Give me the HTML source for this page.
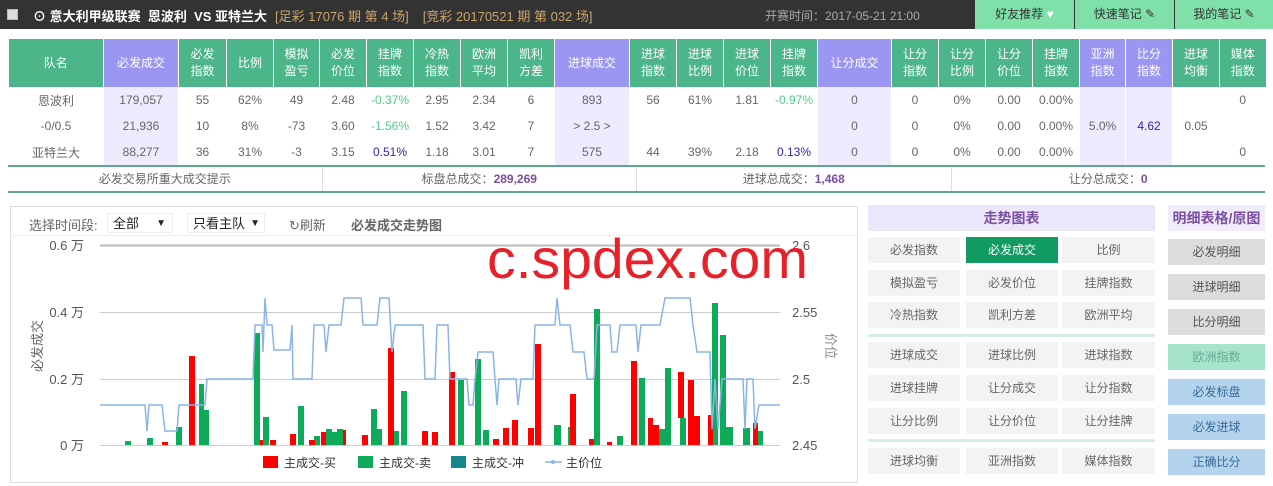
<!DOCTYPE html>
<html><head><meta charset="utf-8"><style>
*{box-sizing:border-box;margin:0;padding:0}
body{width:1273px;height:486px;background:#fff;font-family:"Liberation Sans","Noto Sans CJK SC",sans-serif;font-size:12px;color:#555;position:relative;overflow:hidden}
.top{position:absolute;left:0;top:0;width:1273px;height:29px;background:#333;color:#fff}
.top .t{position:absolute;left:33px;top:6px;font-weight:bold;font-size:13px}
.top .t span{color:#c9a46a;font-weight:normal;margin-left:8px}
.top .tm{position:absolute;left:765px;top:7px;color:#aaa;font-size:12px}
.chk{position:absolute;left:7px;top:9px;width:11px;height:11px;background:#ddd;border:1px solid #bbb}
.btn{position:absolute;top:0;height:29px;background:#7fe0aa;color:#333;font-size:12px;text-align:center;line-height:29px}
table{position:absolute;left:8px;top:39px;border-collapse:collapse;table-layout:fixed}
td{text-align:center;font-size:12px;color:#666;height:26px;padding:0;border-left:1px solid #fff}
tr.h td{background:#4db58a;color:#fff;height:48px;line-height:17px;font-size:12px}
tr.h td.p{background:#9b96f2}
td.lp{background:#efeafd}
.g{color:#5c8}.b{color:#2a2aa0}
.sum{position:absolute;left:8px;top:165px;width:1257px;height:28px;border-top:2px solid #5aa98a;border-bottom:2px solid #5aa98a;display:flex}
.sum div{flex:1;text-align:center;line-height:24px;border-right:1px solid #ddd;font-size:12px;color:#666}
.sum b{color:#7a4ea0}
.chart{position:absolute;left:10px;top:206px;width:848px;height:277px;border:1px solid #ddd}
.rb{position:absolute;height:26px;background:#f3f3f3;color:#666;text-align:center;line-height:26px;font-size:12px}
.rc{position:absolute;left:1168px;width:97px;height:26px;text-align:center;line-height:26px;font-size:12px;color:#555}
</style></head><body>
<div class="top"><div class="chk"></div>
<div class="t">⊙ 意大利甲级联赛&nbsp; 恩波利&nbsp; VS 亚特兰大<span>[足彩 17076 期 第 4 场]</span><span style="margin-left:14px">[竞彩 20170521 期 第 032 场]</span></div>
<div class="tm">开赛时间：2017-05-21 21:00</div>
</div>
<div class="btn" style="left:975px;width:99px">好友推荐 <span style="color:#fff">♥</span></div>
<div class="btn" style="left:1075px;width:99px">快速笔记 ✎</div>
<div class="btn" style="left:1175px;width:98px">我的笔记 ✎</div>

<table>
<colgroup><col style="width:95px"><col style="width:75px"><col style="width:48px"><col style="width:47px"><col style="width:46px"><col style="width:47px"><col style="width:47px"><col style="width:47px"><col style="width:47px"><col style="width:47px"><col style="width:75px"><col style="width:47px"><col style="width:47px"><col style="width:47px"><col style="width:47px"><col style="width:74px"><col style="width:47px"><col style="width:47px"><col style="width:47px"><col style="width:47px"><col style="width:46px"><col style="width:47px"><col style="width:47px"><col style="width:46px"></colgroup>
<tr class="h"><td style="border-left:0">队名</td><td class="p">必发成交</td><td>必发<br>指数</td><td>比例</td><td>模拟<br>盈亏</td><td>必发<br>价位</td><td>挂牌<br>指数</td><td>冷热<br>指数</td><td>欧洲<br>平均</td><td>凯利<br>方差</td><td class="p">进球成交</td><td>进球<br>指数</td><td>进球<br>比例</td><td>进球<br>价位</td><td>挂牌<br>指数</td><td class="p">让分成交</td><td>让分<br>指数</td><td>让分<br>比例</td><td>让分<br>价位</td><td>挂牌<br>指数</td><td class="p">亚洲<br>指数</td><td class="p">比分<br>指数</td><td>进球<br>均衡</td><td>媒体<br>指数</td></tr>
<tr><td>恩波利</td><td class="lp">179,057</td><td>55</td><td>62%</td><td>49</td><td>2.48</td><td class="g">-0.37%</td><td>2.95</td><td>2.34</td><td>6</td><td class="lp">893</td><td>56</td><td>61%</td><td>1.81</td><td class="g">-0.97%</td><td class="lp">0</td><td>0</td><td>0%</td><td>0.00</td><td>0.00%</td><td class="lp" rowspan="3">5.0%</td><td class="lp b" rowspan="3">4.62</td><td rowspan="3">0.05</td><td>0</td></tr>
<tr><td>-0/0.5</td><td class="lp">21,936</td><td>10</td><td>8%</td><td>-73</td><td>3.60</td><td class="g">-1.56%</td><td>1.52</td><td>3.42</td><td>7</td><td class="lp">&gt; 2.5 &gt;</td><td></td><td></td><td></td><td></td><td class="lp">0</td><td>0</td><td>0%</td><td>0.00</td><td>0.00%</td><td></td></tr>
<tr><td>亚特兰大</td><td class="lp">88,277</td><td>36</td><td>31%</td><td>-3</td><td>3.15</td><td class="b">0.51%</td><td>1.18</td><td>3.01</td><td>7</td><td class="lp">575</td><td>44</td><td>39%</td><td>2.18</td><td class="b">0.13%</td><td class="lp">0</td><td>0</td><td>0%</td><td>0.00</td><td>0.00%</td><td>0</td></tr>
</table>
<div class="sum"><div>必发交易所重大成交提示</div><div>标盘总成交：<b>289,269</b></div><div>进球总成交：<b>1,468</b></div><div style="border-right:0">让分总成交：<b>0</b></div></div>

<div class="chart"></div>
<div style="position:absolute;left:29px;top:215px;font-size:13px;color:#666">选择时间段:</div>
<div style="position:absolute;left:107px;top:213px;width:66px;height:20px;border:1px solid #eee;font-size:13px;color:#222;line-height:19px;padding-left:5px">全部<span style="position:absolute;right:6px;font-size:10px">▼</span></div>
<div style="position:absolute;left:187px;top:213px;width:78px;height:20px;border:1px solid #eee;font-size:13px;color:#222;line-height:19px;padding-left:5px">只看主队<span style="position:absolute;right:4px;font-size:10px">▼</span></div>
<div style="position:absolute;left:289px;top:215px;font-size:13px;color:#666">↻刷新</div>
<div style="position:absolute;left:351px;top:215px;font-size:13px;color:#666;font-weight:bold">必发成交走势图</div>
<div style="position:absolute;left:10px;top:235px;width:848px;height:1px;background:#eee"></div>

<svg style="position:absolute;left:0;top:0" width="860" height="486">
<g stroke="#ccc" stroke-width="1">
<line x1="100" y1="245.5" x2="780" y2="245.5" stroke="#bbb" stroke-width="2"/>
<line x1="100" y1="312.5" x2="780" y2="312.5"/>
<line x1="100" y1="379.5" x2="780" y2="379.5"/>
<line x1="100" y1="445.5" x2="780" y2="445.5"/>
</g>
<g font-size="13" fill="#555" font-family="Liberation Sans,Noto Sans CJK SC,sans-serif">
<text x="84" y="250" text-anchor="end">0.6 万</text>
<text x="84" y="317" text-anchor="end">0.4 万</text>
<text x="84" y="384" text-anchor="end">0.2 万</text>
<text x="84" y="450" text-anchor="end">0 万</text>
<text x="792" y="250">2.6</text>
<text x="792" y="317">2.55</text>
<text x="792" y="384">2.5</text>
<text x="792" y="450">2.45</text>
<text transform="translate(42,346) rotate(-90)" text-anchor="middle" fill="#666">必发成交</text>
<text transform="translate(826,346) rotate(90)" text-anchor="middle" fill="#888">价位</text>
</g>
<g fill="#0daa5a">
<rect x="125" y="441" width="6" height="4"/><rect x="147" y="438" width="6" height="7"/><rect x="176" y="427" width="6" height="18"/>
<rect x="199" y="384" width="5" height="61"/><rect x="204" y="410" width="5" height="35"/><rect x="254" y="333" width="6" height="112"/>
<rect x="263" y="417" width="6" height="28"/><rect x="298" y="406" width="6" height="39"/><rect x="314" y="436" width="6" height="9"/>
<rect x="326" y="429" width="6" height="16"/><rect x="332" y="432" width="5" height="13"/><rect x="337" y="429" width="6" height="16"/>
<rect x="371" y="409" width="6" height="36"/><rect x="377" y="429" width="5" height="16"/><rect x="394" y="431" width="5" height="14"/>
<rect x="401" y="391" width="6" height="54"/><rect x="458" y="380" width="6" height="65"/><rect x="475" y="359" width="6" height="86"/>
<rect x="483" y="430" width="6" height="15"/><rect x="554" y="425" width="7" height="20"/><rect x="568" y="427" width="5" height="18"/>
<rect x="594" y="309" width="6" height="136"/><rect x="617" y="436" width="6" height="9"/><rect x="639" y="378" width="6" height="67"/>
<rect x="659" y="429" width="6" height="16"/><rect x="665" y="368" width="6" height="77"/><rect x="680" y="418" width="6" height="27"/>
<rect x="712" y="303" width="6" height="142"/><rect x="720" y="335" width="6" height="110"/><rect x="726" y="427" width="7" height="18"/>
<rect x="743" y="428" width="7" height="17"/><rect x="757" y="431" width="6" height="14"/>
</g>
<g fill="#f00">
<rect x="162" y="442" width="6" height="3"/><rect x="189" y="356" width="6" height="89"/><rect x="260" y="440" width="3" height="5"/>
<rect x="270" y="440" width="6" height="5"/><rect x="290" y="434" width="6" height="11"/><rect x="309" y="440" width="6" height="5"/>
<rect x="321" y="432" width="5" height="13"/><rect x="343" y="430" width="3" height="15"/><rect x="362" y="435" width="6" height="10"/>
<rect x="388" y="348" width="6" height="97"/><rect x="422" y="431" width="6" height="14"/><rect x="432" y="432" width="6" height="13"/>
<rect x="449" y="372" width="6" height="73"/><rect x="493" y="439" width="6" height="6"/><rect x="503" y="428" width="6" height="17"/>
<rect x="512" y="420" width="6" height="25"/><rect x="528" y="428" width="6" height="17"/><rect x="535" y="344" width="6" height="101"/>
<rect x="570" y="394" width="6" height="51"/><rect x="589" y="439" width="5" height="6"/><rect x="607" y="442" width="5" height="3"/>
<rect x="631" y="361" width="6" height="84"/><rect x="648" y="418" width="5" height="27"/><rect x="653" y="425" width="6" height="20"/>
<rect x="678" y="372" width="6" height="46"/><rect x="688" y="380" width="6" height="65"/><rect x="694" y="416" width="6" height="29"/>
<rect x="708" y="415" width="5" height="30"/><rect x="753" y="423" width="5" height="22"/>
</g>
<polyline fill="none" stroke="#8ab4e6" stroke-width="1.5" points="100,405 145,405 147,431 149,405 162,405 165,431 177,431 179,405 205,405 207,379 253,379 255,325 262,325 263,352 265,298 267,325 272,325 274,350 290,350 292,325 293,379 312,379 314,325 324,325 326,352 329,325 341,325 344,298 361,298 363,325 377,325 380,298 389,298 392,352 395,325 423,325 425,379 435,379 437,325 448,325 450,379 467,379 469,405 473,405 475,379 478,352 493,352 495,379 497,405 499,379 516,379 518,405 521,379 533,379 535,325 555,325 557,298 560,325 570,325 573,352 584,352 587,379 594,379 597,325 610,325 612,352 617,352 620,325 636,325 638,352 641,325 660,325 665,298 690,298 693,325 697,352 710,352 712,429 715,379 718,429 722,379 743,379 745,429 747,379 753,379 755,429 759,405 780,405"/>
<g font-size="12" fill="#333" font-family="Liberation Sans,Noto Sans CJK SC,sans-serif">
<rect x="263" y="456" width="15" height="12" fill="#f00"/><text x="284" y="467">主成交-买</text>
<rect x="358" y="456" width="15" height="12" fill="#0daa5a"/><text x="379" y="467">主成交-卖</text>
<rect x="451" y="456" width="15" height="12" fill="#13878a"/><text x="472" y="467">主成交-冲</text>
<line x1="545" y1="462" x2="562" y2="462" stroke="#8ab4e6" stroke-width="1.5"/><circle cx="553" cy="462" r="2" fill="#8ab4e6"/><text x="566" y="467">主价位</text>
</g>
<text x="487" y="278" font-size="56" fill="#e8202a" font-family="Liberation Sans,sans-serif" textLength="321" lengthAdjust="spacingAndGlyphs">c.spdex.com</text>
</svg>

<div style="position:absolute;left:868px;top:205px;width:287px;height:26px;background:#ece6fb;color:#7a4ea0;font-weight:bold;font-size:14px;text-align:center;line-height:26px">走势图表</div>
<div style="position:absolute;left:1168px;top:205px;width:97px;height:26px;background:#f0ecfb;color:#7a4ea0;font-weight:bold;font-size:14px;text-align:center;line-height:26px">明细表格/原图</div>
<div style="position:absolute;left:868px;top:334px;width:287px;height:3px;background:#d2efe2"></div>
<div style="position:absolute;left:868px;top:439px;width:287px;height:3px;background:#d2efe2"></div>

<div class="rb" style="left:868px;top:237px;width:92px">必发指数</div>
<div class="rb" style="left:966px;top:237px;width:92px;background:#119a62;color:#fff">必发成交</div>
<div class="rb" style="left:1062px;top:237px;width:93px">比例</div>
<div class="rb" style="left:868px;top:270px;width:92px">模拟盈亏</div>
<div class="rb" style="left:966px;top:270px;width:92px">必发价位</div>
<div class="rb" style="left:1062px;top:270px;width:93px">挂牌指数</div>
<div class="rb" style="left:868px;top:302px;width:92px">冷热指数</div>
<div class="rb" style="left:966px;top:302px;width:92px">凯利方差</div>
<div class="rb" style="left:1062px;top:302px;width:93px">欧洲平均</div>
<div class="rb" style="left:868px;top:342px;width:92px">进球成交</div>
<div class="rb" style="left:966px;top:342px;width:92px">进球比例</div>
<div class="rb" style="left:1062px;top:342px;width:93px">进球指数</div>
<div class="rb" style="left:868px;top:375px;width:92px">进球挂牌</div>
<div class="rb" style="left:966px;top:375px;width:92px">让分成交</div>
<div class="rb" style="left:1062px;top:375px;width:93px">让分指数</div>
<div class="rb" style="left:868px;top:408px;width:92px">让分比例</div>
<div class="rb" style="left:966px;top:408px;width:92px">让分价位</div>
<div class="rb" style="left:1062px;top:408px;width:93px">让分挂牌</div>
<div class="rb" style="left:868px;top:448px;width:92px">进球均衡</div>
<div class="rb" style="left:966px;top:448px;width:92px">亚洲指数</div>
<div class="rb" style="left:1062px;top:448px;width:93px">媒体指数</div>

<div class="rc" style="top:239px;background:#dcdcdc">必发明细</div>
<div class="rc" style="top:274px;background:#dcdcdc">进球明细</div>
<div class="rc" style="top:309px;background:#dcdcdc">比分明细</div>
<div class="rc" style="top:344px;background:#a6e5c9;color:#6a9">欧洲指数</div>
<div class="rc" style="top:379px;background:#b3d4ec;color:#3a6a9a">必发标盘</div>
<div class="rc" style="top:414px;background:#b3d4ec;color:#3a6a9a">必发进球</div>
<div class="rc" style="top:449px;background:#b3d4ec;color:#3a6a9a">正确比分</div>
</body></html>
